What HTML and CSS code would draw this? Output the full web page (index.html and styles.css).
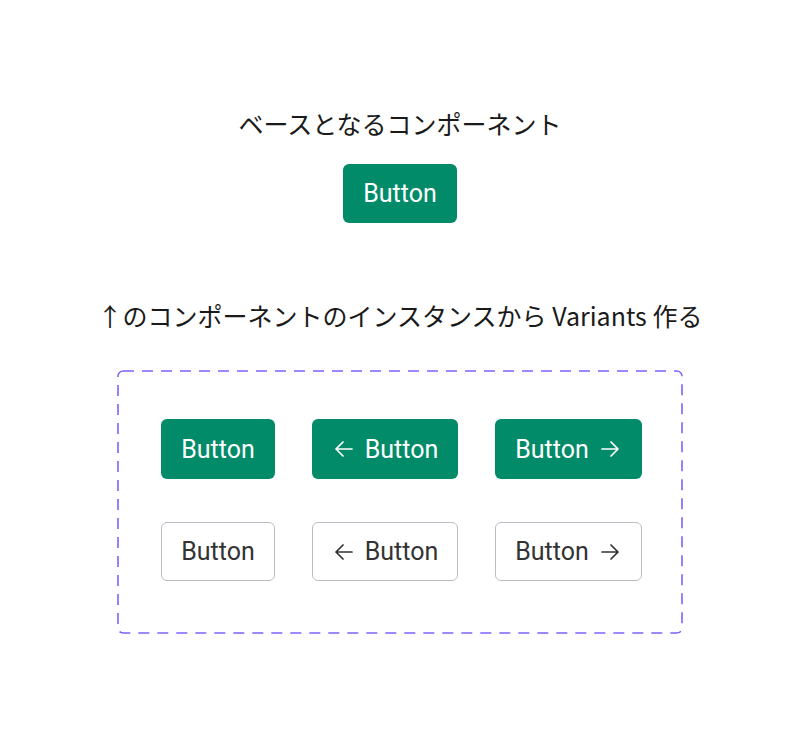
FILE: index.html
```html
<!DOCTYPE html>
<html lang="ja">
  <head>
    <meta charset="UTF-8" />
    <link rel="stylesheet" href="styles.css">
  </head>
  <body>
    <main class="page">
      <h2 class="caption">ベースとなるコンポーネント</h2>
      <button class="btn btn-primary">Button</button>

      <h2 class="caption caption-variants">↑のコンポーネントのインスタンスから Variants 作る</h2>
      <div class="variants">
        <button class="btn btn-primary">Button</button>
        <button class="btn btn-primary btn-icon-left">
          <svg class="icon" viewBox="0 0 24 24"><path d="M20 12H4M11 5l-7 7 7 7" /></svg>
          Button
        </button>
        <button class="btn btn-primary btn-icon-right">
          Button
          <svg class="icon" viewBox="0 0 24 24"><path d="M4 12h16M13 5l7 7-7 7" /></svg>
        </button>

        <button class="btn btn-outline">Button</button>
        <button class="btn btn-outline btn-icon-left">
          <svg class="icon" viewBox="0 0 24 24"><path d="M20 12H4M11 5l-7 7 7 7" /></svg>
          Button
        </button>
        <button class="btn btn-outline btn-icon-right">
          Button
          <svg class="icon" viewBox="0 0 24 24"><path d="M4 12h16M13 5l7 7-7 7" /></svg>
        </button>
      </div>
    </main>
  </body>
</html>
```

FILE: styles.css
```css
:root {
  --green: #028b69;
  --purple: #7b61ff;
  --outline-border: #b9bdc3;
  --text: #1a1a1a;
}

body {
  margin: 0;
  background: #ffffff;
  color: var(--text);
  font-family: "Noto Sans CJK JP", "Noto Sans", sans-serif;
}

.page {
  display: flex;
  flex-direction: column;
  align-items: center;
  padding-top: 105px;
}

.caption {
  margin: 0;
  font-size: 25px;
  font-weight: 400;
  line-height: 36px;
}

.caption-variants {
  margin-top: 74px;
}

.btn {
  display: inline-flex;
  align-items: center;
  justify-content: center;
  gap: 9px;
  padding: 16px 20px;
  border: none;
  border-radius: 6px;
  font-family: Roboto, "Liberation Sans", sans-serif;
  font-size: 25px;
  line-height: 27px;
  cursor: pointer;
}

.page > .btn {
  margin-top: 23px;
}

.variants .btn {
  padding-top: 16.5px;
  padding-bottom: 16.5px;
}

.btn-primary {
  background: var(--green);
  color: #ffffff;
}

.variants .btn-outline,
.btn-outline {
  background: #ffffff;
  color: #333333;
  border: 1.5px solid var(--outline-border);
  padding: 15px 18.5px;
}

.icon {
  width: 24px;
  height: 24px;
  margin: -1px 0;
  flex: none;
  fill: none;
  stroke: currentColor;
  stroke-width: 1.7;
  stroke-linecap: round;
  stroke-linejoin: round;
}

.variants {
  margin-top: 37px;
  display: grid;
  grid-template-columns: repeat(3, auto);
  column-gap: 37px;
  row-gap: 43px;
  padding: 49px 41px 53px 44px;
  border-radius: 6px;
  background-image: url("data:image/svg+xml,%3Csvg xmlns='http://www.w3.org/2000/svg' width='100%25' height='100%25'%3E%3Crect x='1' y='1' width='calc(100%25 - 2px)' height='calc(100%25 - 2px)' rx='5' ry='5' fill='none' stroke='%237b61ff' stroke-width='1.6' stroke-dasharray='11 8'/%3E%3C/svg%3E");
}
```
